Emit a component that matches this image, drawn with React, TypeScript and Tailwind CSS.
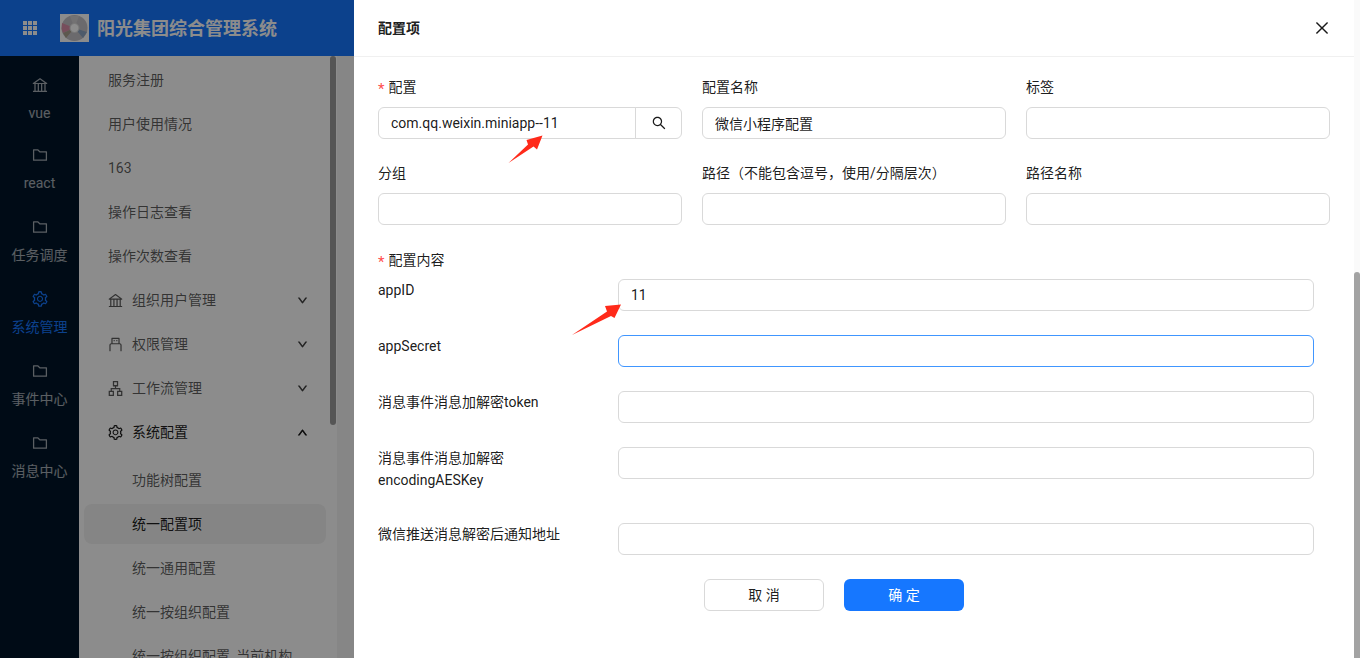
import React from "react";
import { AiOutlineBank, AiOutlineFolder, AiOutlineSetting, AiOutlineApartment, AiOutlineUsb, AiOutlineDown, AiOutlineUp, AiOutlineClose, AiOutlineSearch } from "react-icons/ai";

const railItems = [
  { icon: AiOutlineBank, label: "vue", first: true },
  { icon: AiOutlineFolder, label: "react" },
  { icon: AiOutlineFolder, label: "任务调度" },
  { icon: AiOutlineSetting, label: "系统管理", active: true },
  { icon: AiOutlineFolder, label: "事件中心" },
  { icon: AiOutlineFolder, label: "消息中心" },
];

type MenuRow = { label: string; icon?: React.ComponentType<{ className?: string }>; arrow?: "down" | "up"; sub?: boolean; selected?: boolean };

const menuTop: MenuRow[] = [
  { label: "服务注册" },
  { label: "用户使用情况" },
  { label: "163" },
  { label: "操作日志查看" },
  { label: "操作次数查看" },
  { label: "组织用户管理", icon: AiOutlineBank, arrow: "down" },
  { label: "权限管理", icon: AiOutlineUsb, arrow: "down" },
  { label: "工作流管理", icon: AiOutlineApartment, arrow: "down" },
  { label: "系统配置", icon: AiOutlineSetting, arrow: "up" },
];
const menuSub: MenuRow[] = [
  { label: "功能树配置", sub: true },
  { label: "统一配置项", sub: true, selected: true },
  { label: "统一通用配置", sub: true },
  { label: "统一按组织配置", sub: true },
  { label: "统一按组织配置_当前机构", sub: true },
];

function Row({ row }: { row: MenuRow }) {
  const Icon = row.icon;
  const strong = row.selected || row.arrow === "up";
  return (
    <div className={`flex h-10 shrink-0 items-center rounded-lg ${row.sub ? "pl-12" : "pl-6"} pr-[18px] ${row.selected ? "bg-black/5" : ""} ${strong ? "text-black/90" : "text-black/65"}`}>
      {Icon && <Icon className="mr-[8px] -ml-px text-[17px] shrink-0" />}
      <span className="flex-1 whitespace-nowrap">{row.label}</span>
      {row.arrow === "down" && <AiOutlineDown className="text-[11px] [&_path]:stroke-[70px] [&_path]:stroke-current" />}
      {row.arrow === "up" && <AiOutlineUp className="text-[11px] [&_path]:stroke-[70px] [&_path]:stroke-current" />}
    </div>
  );
}

function Star() {
  return <span className="mr-[4px] mt-[4px] text-[15px] leading-none text-[#ff4d4f]">*</span>;
}

function Field({ label, required, children }: { label: string; required?: boolean; children?: React.ReactNode }) {
  return (
    <div className="flex flex-col">
      <div className="flex h-[22px] items-center mb-[9px] text-black/90">
        {required && <Star />}
        <span>{label}</span>
      </div>
      {children ?? <TextInput />}
    </div>
  );
}

function TextInput({ value = "", focus, className = "" }: { value?: string; focus?: boolean; className?: string }) {
  return (
    <input
      readOnly
      value={value}
      className={`h-8 w-full rounded-md border bg-white px-3 text-[14px] text-black/90 outline-none ${focus ? "border-[#4096ff]" : "border-[#d9d9d9]"} ${className}`}
    />
  );
}

function InnerRow({ label, value, focus, tall }: { label: React.ReactNode; value?: string; focus?: boolean; tall?: boolean }) {
  return (
    <div className={`flex items-start ${tall ? "h-[52px]" : "h-8"}`}>
      <div className="w-[240px] shrink-0 leading-[22px] text-black/90">{label}</div>
      <div className="w-[696px]">
        <TextInput value={value} focus={focus} />
      </div>
    </div>
  );
}

function Logo() {
  return (
    <svg viewBox="0 0 29 28" className="h-7 w-[29px] shrink-0">
      <rect width="29" height="28" fill="#ffffff" />
      <circle cx="14.5" cy="14" r="13" fill="#c4c2c6" />
      <path d="M14.5 14 L2 9 L1.6 15 L3 19 Z" fill="#d98fa8" />
      <path d="M14.5 14 L3 19 L6 24 Z" fill="#a9a08e" />
      <path d="M14.5 14 L27 18 L23 24 Z" fill="#8fa6c4" />
      <path d="M14.5 14 L10 2 L19 2 Z" fill="#d2d0d2" />
      <circle cx="14.5" cy="14" r="4.5" fill="#ffffff" />
      <circle cx="14.5" cy="14" r="4.5" fill="none" stroke="#d8d8d8" strokeWidth="1" />
    </svg>
  );
}

export default function App() {
  return (
    <div
      className="relative h-[658px] w-[1360px] overflow-hidden bg-[#f5f5f5] text-[14px]"
      style={{ fontFamily: 'Roboto, "Noto Sans CJK SC", sans-serif' }}
    >
      <header className="flex h-14 items-center bg-[#1677ff] text-white">
        <div className="flex w-[60px] justify-center">
          <div className="grid grid-cols-3 gap-[1px]">
            {Array.from({ length: 9 }).map((_, i) => (
              <span key={i} className="h-1 w-1 bg-white" />
            ))}
          </div>
        </div>
        <Logo />
        <span className="ml-2 text-[18px] font-bold">阳光集团综合管理系统</span>
      </header>

      <div className="flex h-[602px]">
        <nav className="w-[79px] shrink-0 bg-[#001529] pt-[3px]">
          {railItems.map((it) => {
            const Icon = it.icon;
            return (
              <div key={it.label} className={`flex ${it.first ? "h-[70px]" : "h-[72px]"} flex-col items-center pt-[17px] ${it.active ? "text-[#1677ff]" : "text-white/65"}`}>
                <Icon className="text-[18px]" />
                <span className="mt-2 whitespace-nowrap leading-[22px]">{it.label}</span>
              </div>
            );
          })}
        </nav>

        <aside className="flex w-[258px] shrink-0 bg-white">
          <div className="flex w-[247px] shrink-0 flex-col gap-1 overflow-hidden pl-[5px] pt-1">
            {menuTop.map((r) => <Row key={r.label} row={r} />)}
            <div className="h-0" />
            {menuSub.map((r) => <Row key={r.label} row={r} />)}
          </div>
          <div className="ml-[4px] h-[369px] w-[6px] rounded-full bg-[#9c9c9c]" />
        </aside>
      </div>

      {/* mask and drawer lie over the page */}
      <div className="absolute inset-0 bg-black/45" />
      <section className="absolute bottom-0 right-0 top-0 flex w-[1006px] bg-white">
        <div className="w-[1000px] shrink-0">
          <div className="flex h-[57px] items-center justify-between border-b border-[#f0f0f0] pl-6 pr-[23px]">
            <span className="font-semibold text-black/90">配置项</span>
            <AiOutlineClose className="text-[18px] text-black/90" />
          </div>
          <div className="pl-6 pr-6 pt-[19px]">
            <div className="grid grid-cols-3 gap-x-5 gap-y-[23px]">
              <Field label="配置" required>
                <div className="flex">
                  <TextInput value="com.qq.weixin.miniapp--11" className="flex-1 rounded-r-none" />
                  <div className="-ml-px flex h-8 w-[47px] shrink-0 items-center justify-center rounded-r-md border border-[#d9d9d9] text-black/90">
                    <AiOutlineSearch className="text-[16px]" />
                  </div>
                </div>
              </Field>
              <Field label="配置名称"><TextInput value="微信小程序配置" /></Field>
              <Field label="标签" />
              <Field label="分组" />
              <Field label="路径（不能包含逗号，使用/分隔层次）" />
              <Field label="路径名称" />
            </div>

            <div className="mt-6 flex h-[22px] items-center text-black/90">
              <Star />
              <span>配置内容</span>
            </div>
            <div className="mt-2 flex flex-col gap-6">
              <InnerRow label="appID" value="11" />
              <InnerRow label="appSecret" focus />
              <InnerRow label="消息事件消息加解密token" />
              <InnerRow label={<>消息事件消息加解密<br />encodingAESKey</>} tall />
              <InnerRow label="微信推送消息解密后通知地址" />
            </div>

            <div className="mt-6 flex justify-center gap-5 pr-[40px]">
              <button className="h-8 w-[120px] rounded-md border border-[#d9d9d9] bg-white text-black/90">取 消</button>
              <button className="h-8 w-[120px] rounded-md bg-[#1677ff] text-white">确 定</button>
            </div>
          </div>
        </div>
        <div className="w-[6px] bg-[#fafafa] pt-[272px]">
          <div className="h-[386px] w-full rounded-t-[3px] bg-[#a3a3a3]" />
        </div>
      </section>

      {/* annotation arrows drawn on the screenshot */}
      <svg className="pointer-events-none absolute inset-0 h-full w-full" viewBox="0 0 1360 658">
        <polygon points="508.5,163 528,144.5 526.5,140 542.5,135.5 537,149.5 533.5,146.5" fill="#ff2a1a" />
        <polygon points="572,335 607,311.5 605,306 621,304.5 614.5,318 611,316" fill="#ff2a1a" />
      </svg>
    </div>
  );
}
